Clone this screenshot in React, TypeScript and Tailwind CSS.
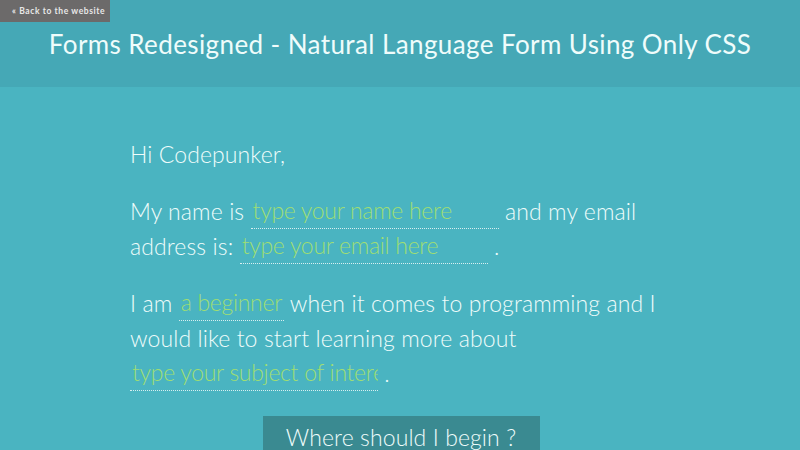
function Field({ placeholder, width }: { placeholder: string; width: string }) {
  return (
    <span
      className={`inline-block h-[35px] ${width} overflow-hidden whitespace-nowrap border-b border-dotted border-[#d8eef0] px-[2px] align-top leading-[33px] tracking-[-0.3px] text-[#9fde74]`}
    >
      {placeholder}
    </span>
  );
}

export default function App() {
  return (
    <div className="h-[450px] w-[800px] overflow-hidden bg-[#4ab4c1] font-['Lato',sans-serif] text-[#effcfb]">
      <header className="relative flex h-[87px] items-center justify-center bg-[#45a8b6]">
        <a className="absolute left-0 top-0 flex h-[22px] w-[110px] items-center bg-[#6c6a6a] pl-[12px] text-[8.5px] font-bold tracking-[0.6px] text-[#e8e8e8]">
          « Back to the website
        </a>
        <h1 className="pt-[2px] text-[26px] font-normal tracking-[0.4px]">
          Forms Redesigned - Natural Language Form Using Only CSS
        </h1>
      </header>
      <main className="ml-[130px] w-[545px] pt-[50px] font-['Lato_Light','Lato',sans-serif] text-[23px] font-light leading-[35px] tracking-[0.1px]">
        <p>Hi Codepunker,</p>
        <p className="mt-[22px]">
          My name is <Field placeholder="type your name here" width="w-[248px]" /> and my email address is:{" "}
          <Field placeholder="type your email here" width="w-[248px]" /> .
        </p>
        <p className="mt-[22px]">
          I am <Field placeholder="a beginner" width="w-auto" /> when it comes to programming and I would like to
          start learning more about <Field placeholder="type your subject of interest" width="w-[248px]" /> .
        </p>
        <div className="mt-[25px] flex justify-center pr-[3px]">
          <button className="h-[55px] w-[277px] bg-[#3a8a91] pb-[12px] text-[23px] font-light text-[#effcfb]">
            Where should I begin ?
          </button>
        </div>
      </main>
    </div>
  );
}
